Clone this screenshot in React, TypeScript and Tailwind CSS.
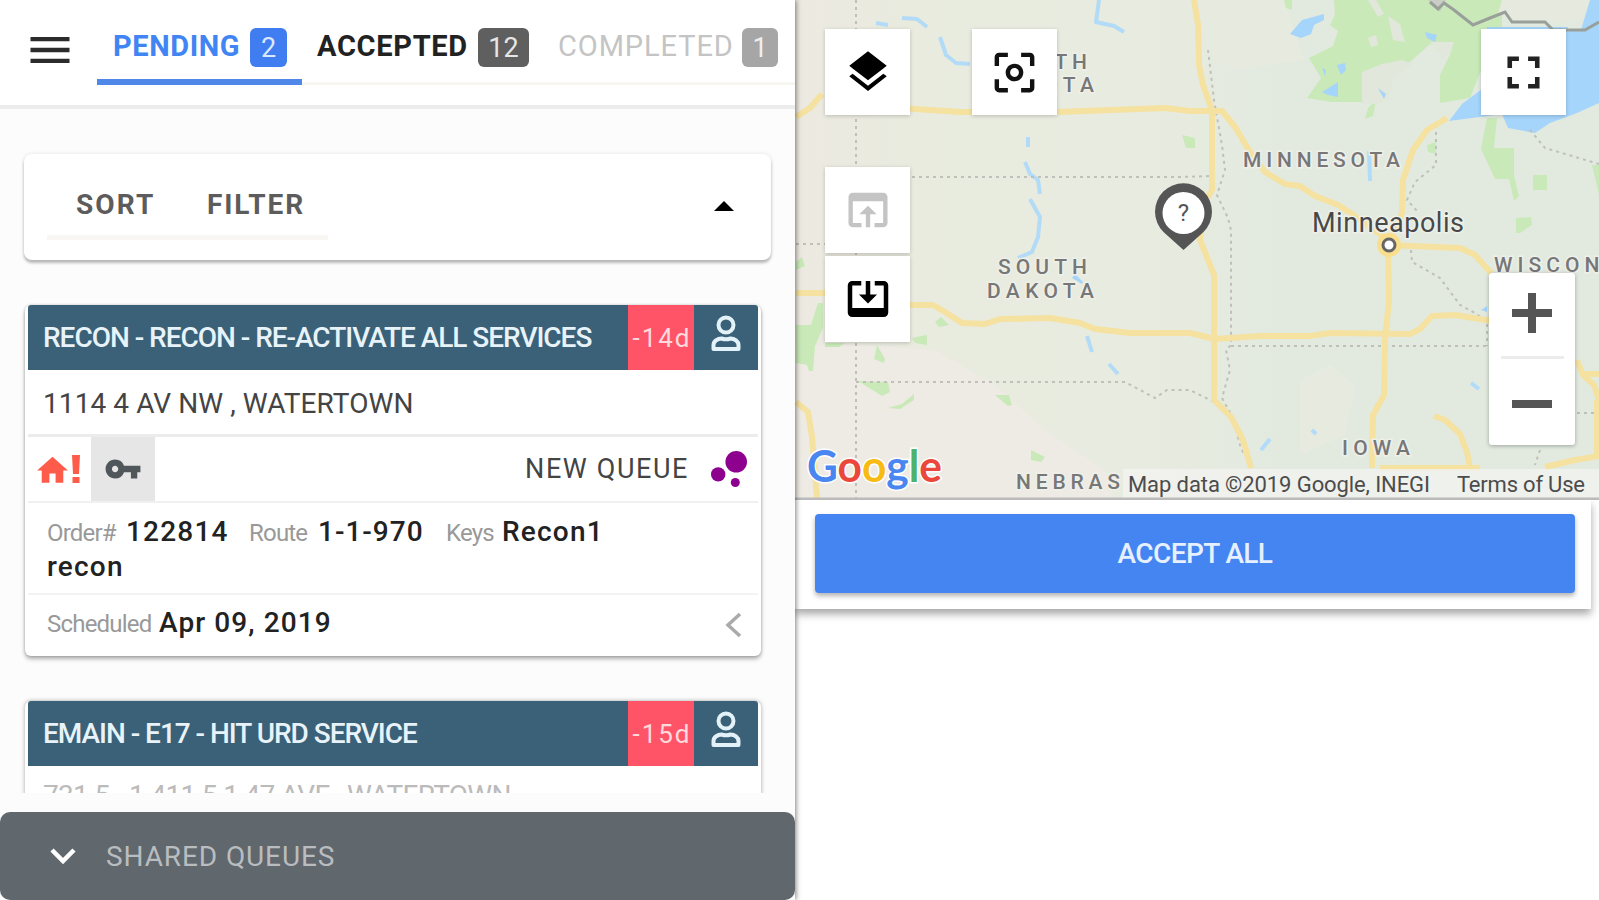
import type { ReactNode } from "react";
import clsx from "clsx";
import {
  MdArrowDropUp,
  MdBubbleChart,
  MdCenterFocusWeak,
  MdFullscreen,
  MdHome,
  MdLayers,
  MdMenu,
  MdOpenInBrowser,
  MdVpnKey,
} from "react-icons/md";

function PersonIcon() {
  return (
    <svg width="34" height="42" viewBox="0 0 34 42" fill="none" stroke="#e3f1f8" strokeWidth="4">
      <circle cx="17" cy="12" r="7.500" />
      <path d="M4.500 36v-4c0-3.500 4-6.500 8-6.500 3 1 6 1 9 0 4 0 8 3 8 6.500v4z" strokeLinejoin="round" />
    </svg>
  );
}

function Header() {
  return (
    <header className="flex h-[109px] shrink-0 border-b-4 border-[#ececec] bg-white">
      <div className="flex w-[97px] shrink-0 pt-[24px] pl-[24px]">
        <MdMenu size={52} color="#2b2b2b" />
      </div>
      <nav className="flex h-[85px] flex-1 text-[29px] leading-[40px]">
        <div className="flex w-[205px] border-b-[6px] border-[#5088ea] pt-[26px] pl-[16px] font-bold text-[#4184f3]">
          <span className="w-[137px] tracking-[0.6px]">PENDING</span>
          <span className="mt-[2px] flex h-[39px] w-[37px] items-center justify-center rounded-[6px] bg-[#3f7df0] text-[27px] font-normal text-[#dce8ff]">
            2
          </span>
        </div>
        <div className="flex w-[239px] border-b-[3px] border-[#f8f6f1] pt-[26px] pl-[15px] font-bold text-[#222]">
          <span className="w-[161px] tracking-[0.7px]">ACCEPTED</span>
          <span className="mt-[2px] flex h-[39px] w-[51px] items-center justify-center rounded-[6px] bg-[#5f5f5f] text-[27px] font-normal text-[#e6e6e6]">
            12
          </span>
        </div>
        <div className="flex flex-1 border-b-[3px] border-[#f8f6f1] pt-[26px] pl-[17px] text-[#c4c4c4]">
          <span className="w-[184px] tracking-[0.9px]">COMPLETED</span>
          <span className="mt-[2px] flex h-[39px] w-[36px] items-center justify-center rounded-[6px] bg-[#a6a6a6] text-[27px] text-[#eee]">
            1
          </span>
        </div>
      </nav>
    </header>
  );
}

function SortFilter() {
  return (
    <div className="mt-[45px] ml-[24px] flex h-[106px] w-[747px] shrink-0 items-start justify-between rounded-[8px] bg-white shadow-[0_3px_3px_rgba(0,0,0,0.25),0_0_4px_rgba(0,0,0,0.1)]">
      <div className="ml-[23px] flex h-[86px] w-[281px] border-b-[5px] border-[#f8f7f4] pt-[31px] pl-[29px] text-[28px] leading-[40px] font-bold text-[#5c5c5c]">
        <span className="w-[131px] tracking-[2.1px]">SORT</span>
        <span className="tracking-[1.900px]">FILTER</span>
      </div>
      <MdArrowDropUp size={48} color="#000" className="mt-[29px] mr-[23px]" />
    </div>
  );
}

function TaskHeader({ title, age }: { title: string; age: string }) {
  return (
    <div className="flex h-[65px] shrink-0 overflow-hidden rounded-t-[3px] bg-[#3a6178]">
      <div className="flex-1 pl-[15px] text-[28px] leading-[66px] font-medium tracking-[-1.030px] whitespace-nowrap text-[#e8f3f9]">
        {title}
      </div>
      <div className="w-[66px] bg-[#ff5468] pl-[2px] text-center text-[26px] leading-[66px] tracking-[2px] text-[#ffd9dc]">
        {age}
      </div>
      <div className="flex w-[64px] justify-center pt-[8px]">
        <PersonIcon />
      </div>
    </div>
  );
}

function Label({ children }: { children: ReactNode }) {
  return <span className="text-[24px] tracking-[-0.8px] text-[#999]">{children}</span>;
}

function TaskCard() {
  return (
    <div className="mt-[45px] ml-[25px] h-[351px] w-[736px] shrink-0 rounded-[6px] bg-white px-[3px] text-[28px] text-[#222] shadow-[0_3px_4px_rgba(0,0,0,0.3),0_0_3px_rgba(0,0,0,0.2)]">
      <TaskHeader title="RECON - RECON - RE-ACTIVATE ALL SERVICES" age="-14d" />
      <div className="h-[67px] border-b-[3px] border-[#ececec] pl-[15px] leading-[67px] tracking-[0.08px] text-[#444]">
        1114 4 AV NW , WATERTOWN
      </div>
      <div className="flex h-[66px] items-center border-b-2 border-[#f0f0f0]">
        <div className="flex w-[63px] items-center gap-[1px] pl-[6px] text-[#ff5b4a]">
          <MdHome size={37} className="mt-[3px]" />
          <svg width="8" height="28" viewBox="0 0 8 28" fill="currentColor">
            <path d="M0 0h8l-1 19H1zM0.500 22h7v6h-7z" />
          </svg>
        </div>
        <div className="flex h-full w-[64px] items-center justify-center bg-[#e6e6e6]">
          <MdVpnKey size={38} color="#50575b" />
        </div>
        <div className="ml-auto text-[27px] tracking-[1.600px] text-[#444]">NEW QUEUE</div>
        <MdBubbleChart size={54} color="#8e008e" className="mr-[2px] ml-[13px]" />
      </div>
      <div className="h-[92px] border-b-2 border-[#f3f3f3] pt-[12px] pl-[19px] leading-[34px] font-medium">
        <div className="flex items-baseline">
          <div className="w-[79px] font-normal"><Label>Order#</Label></div>
          <div className="w-[123px] tracking-[1.2px]">122814</div>
          <div className="w-[69px] font-normal"><Label>Route</Label></div>
          <div className="w-[128px] tracking-[1px]">1-1-970</div>
          <div className="w-[56px] font-normal"><Label>Keys</Label></div>
          <div className="tracking-[1.2px]">Recon1</div>
        </div>
        <div className="tracking-[1.2px]">recon</div>
      </div>
      <div className="flex h-[60px] items-baseline pt-[11px] pl-[19px] leading-[34px]">
        <div className="w-[112px]"><Label>Scheduled</Label></div>
        <div className="font-medium tracking-[1.1px]">Apr 09, 2019</div>
        <svg className="mt-[5px] mr-[16px] ml-auto self-start" width="18" height="28" viewBox="0 0 18 28" fill="none" stroke="#aaa" strokeWidth="3.500">
          <path d="M16 3L4 14l12 11" />
        </svg>
      </div>
    </div>
  );
}

function TaskPanel() {
  return (
    <div className="relative z-10 flex h-[900px] w-[795px] shrink-0 flex-col bg-[#fcfcfc] shadow-[1px_0_5px_rgba(0,0,0,0.5)]">
      <Header />
      <div className="flex h-[684px] flex-col overflow-hidden">
        <SortFilter />
        <TaskCard />
        <div className="mt-[45px] ml-[25px] h-[351px] w-[736px] shrink-0 rounded-[6px] bg-white px-[3px] text-[28px] shadow-[0_0_4px_rgba(0,0,0,0.35)]">
          <TaskHeader title="EMAIN - E17 - HIT URD SERVICE" age="-15d" />
          <div className="pl-[15px] leading-[60px] tracking-[-0.680px] text-[#bbb]">
            731 5 - 1 411 5 1 47 AVE , WATERTOWN
          </div>
        </div>
      </div>
      <div className="mt-[19px] flex h-[88px] items-center rounded-[10px] bg-[#60676d] pl-[49px] text-[28px] text-[#b9bdc0]">
        <svg width="28" height="20" viewBox="0 0 28 20" fill="none" stroke="#fff" strokeWidth="4.500">
          <path d="M3 4l11 11L25 4" />
        </svg>
        <span className="mt-[2px] ml-[29px] tracking-[0.900px]">SHARED QUEUES</span>
      </div>
    </div>
  );
}

const roads = [
  "M796 117l14-9 12-14",
  "M900 108l60 4h97l108-4 25 3 32 0 13 16 15 25 15 20 20 12 15 2 15 10 23 9 14 9 36 26",
  "M1194 0l4 25 1 40 4 20 9 25v80l-9 15-3 35 6 15 8 20v125l17 17 12 23 8 28",
  "M1447 118l-20 12-14 20-10 30-1 33-14 32",
  "M1388 245l72 3 15 7 16 18",
  "M1388 245l1 55-4 40-1 55-11 20-1 53",
  "M796 293h30M905 305h28l12 7 17 11 23 1 15-5 50-1 30 5 15 6 35 4h60l25 6 45-3h50l20-3 80 1 10-5 12-13 23-1 37 6",
  "M796 402l12 10 4 25 5 61",
  "M1434 416l11 4 15 14 7 18 3 16M1380 468h100",
  "M1545 467l30-7 24-4",
  "M1577 360l6 15 11 10 5 15M1583 374h16M1597 400v56",
];

const borders = [
  "M856 0v498",
  "M796 244h30M905 177h275l32-1",
  "M856 382h269l30 16 12-8h23l24 12",
  "M1208 50l6 50 8 45 3 25-8 25 11 23 3 12v115l-5 5 4 20-8 28 11 20 7 27 4 10",
  "M1231 346h258",
  "M1436 125v40l-21 17-8 18 11 12M1411 250l1 12 28 16 20 27 15 8 12 9v24",
  "M1530 130l15 18 54 16M1577 413h22M1540 450l-5 15",
];

const parks = [
  "M1334 0h168v28l-20 40-12 30-30 5v-28l12-25-22-6-20 18-30 4-5 36h-44l-24-4 14-20-12-20 24-12 5-15-8-6 5-10z",
  "M1284 0h8v10l-6-2z",
  "M1495 0h6v28h-60l-6-28z",
  "M1368 108l8-8-3 16-8 3z",
  "M1487 118h10l-3 30h20v28l5 20-5 5-5-22h-14l-14-30z",
  "M1533 175h14v15h-14zM1592 165h7v30zM1516 218l15-1 1 8-12 8h-4zM1427 145l9-3v12l-8-2z",
  "M1182 135l13 3v10h-9z",
  "M796 262l6-5 3 9-9 4zM796 325l15 0 7-22 5 0v25l-8 18-2 25h-4l-2-6-11-2z",
  "M825 343h20l-6 4h-14zM877 345l8 14-1 4-10-4zM912 338l15-3v10l-12-2zM935 322l6-5 8 8-10 2z",
  "M858 381l30 1 2 10-8 4zM888 408l14-4 12-10 0 6-14 9zM995 395h14l3 10-4 1zM1031 450l14 7-4 5-10-2z",
];

const water = [
  "M1290 34l12-14 22-6v6l-10 5-3 9-10 4z",
  "M1337 65l8-2 1 7-5 5zM1322 92l16-10v15l-10-2zM1425 32l12 3-2 7-8-4zM1322 68l4 2-1 6zM1378 88l8 6-2 5z",
  "M1449 121l13-17 20-15 5-62h81v3l15 1 16-9v81l-22 10-27 10-15 10-27-5-6-14-30 4z",
  "M1590 0h9v25l-18 5z",
  "M1082 284l-10-6 3-4 8 8zM1481 310l6-4v6z",
];

const rivers = [
  "M876 23l12 2M902 18l15 1 10 8M940 37l6 18 10 8 14 1",
  "M1099 0l-3 22 18 4 10 6",
  "M1028 137v10M1025 162l5 12 8 6 2 14M1030 199l10 18-2 20-6 15-14 6",
  "M1087 336l5 16M1109 364l9 10M1369 151l1 30M1261 450l9-11M1312 430l4 4M1471 383l8 6",
];

function MapLabel(props: { x: number; y: number; width: number; children: ReactNode }) {
  return (
    <text
      x={props.x}
      y={props.y}
      textLength={props.width}
      fontSize="21"
      fontWeight="500"
      fill="#777"
      stroke="#eef0ea"
      strokeWidth="3"
      paintOrder="stroke"
    >
      {props.children}
    </text>
  );
}

function MapCanvas() {
  return (
    <svg className="block" width="804" height="500" viewBox="795 0 804 500" fontFamily="Roboto, sans-serif">
      <defs>
        <linearGradient id="land" x1="0" y1="0" x2="1" y2="0">
          <stop offset="0" stopColor="#ece9e1" />
          <stop offset="0.140" stopColor="#e9ebdf" />
          <stop offset="0.450" stopColor="#e8ebdf" />
          <stop offset="0.600" stopColor="#e2eae0" />
          <stop offset="1" stopColor="#e2eae0" />
        </linearGradient>
      </defs>
      <rect x="795" width="804" height="500" fill="url(#land)" />
      <path d="M795 345l60 0 80 5 60 35 50 45 60 40 10 30H795z" fill="#eeebe4" />
      <path d="M1200 0h84l20 60-70 10-30-20zM1300 380l30-15 25 20-10 50-45 20z" fill="#e7ebdf" />
      <g fill="#c9e9b9">{parks.map((d) => <path key={d} d={d} />)}</g>
      <path d="M1368 0h8l8 14-6 3zM1388 16l12 8 5 18-12-2zM1368 38l8-3 2 10-7 2zM1362 72l20-8 20-4 12 4-20 14-6 22-12 4h-14zM1430 42h24l-4 12-8 6-4-8z" fill="#e2e7dc" />
      <path d="M1502 0h90l-12 22-60 2-15-12-8 5z" fill="#e6e9de" />
      <g fill="#a5d5fb">{water.map((d) => <path key={d} d={d} />)}</g>
      <g fill="none" stroke="#b2dbf7" strokeWidth="4" strokeLinejoin="round">
        {rivers.map((d) => <path key={d} d={d} />)}
      </g>
      <g fill="none" stroke="#bfc0b9" strokeWidth="2" strokeDasharray="3 4">
        {borders.map((d) => <path key={d} d={d} />)}
      </g>
      <path d="M1428 0h18l-6 12z" fill="#c9cdc5" />
      <path d="M1430 2l8 7 6-6 10 7 19 15 17-7 15-6 7 10h33l8 8h32l14-8" fill="none" stroke="#999f99" strokeWidth="3" />
      <g fill="none" stroke="#f5e1a0" strokeWidth="6" strokeLinejoin="round">
        {roads.map((d) => <path key={d} d={d} />)}
      </g>
      <circle cx="1389" cy="245" r="12" fill="#f8de8d" />
      <circle cx="1389" cy="245" r="6" fill="#fff" stroke="#666" strokeWidth="3" />

      <MapLabel x={998} y={69} width={89}>NORTH</MapLabel>
      <MapLabel x={987} y={92} width={107}>DAKOTA</MapLabel>
      <MapLabel x={998} y={274} width={89}>SOUTH</MapLabel>
      <MapLabel x={987} y={298} width={107}>DAKOTA</MapLabel>
      <MapLabel x={1243} y={167} width={157}>MINNESOTA</MapLabel>
      <MapLabel x={1342} y={455} width={68}>IOWA</MapLabel>
      <MapLabel x={1494} y={272} width={154}>WISCONSIN</MapLabel>
      <text x="1312" y="232" textLength="152" fontSize="27" fill="#484848" stroke="#eef0ea" strokeWidth="3" paintOrder="stroke">
        Minneapolis
      </text>

      <rect x="1123" y="469" width="476" height="30" fill="#f3f3f0" fillOpacity="0.800" />
      <MapLabel x={1016} y={489} width={104}>NEBRAS</MapLabel>
      <g fontSize="22" fill="#4c4c4c">
        <text x="1128" y="492" textLength="302">Map data ©2019 Google, INEGI</text>
        <text x="1457" y="492" textLength="128">Terms of Use</text>
      </g>
      <text x="807" y="482" textLength="135" lengthAdjust="spacingAndGlyphs" fontSize="44" fontWeight="700" fontFamily="Lato, sans-serif" stroke="#fff" strokeWidth="3" paintOrder="stroke">
        <tspan fill="#4a86f0">G</tspan>
        <tspan fill="#e9483b">o</tspan>
        <tspan fill="#f8bb15">o</tspan>
        <tspan fill="#4a86f0">g</tspan>
        <tspan fill="#4fb26b">l</tspan>
        <tspan fill="#e9483b">e</tspan>
      </text>

      <path d="M1183.500 250l-20-18a28.500 28.500 0 1 1 40 0z" fill="#555" />
      <circle cx="1183.500" cy="213" r="21" fill="#fff" />
      <text x="1183.500" y="221" fontSize="24" fill="#555" textAnchor="middle">?</text>
      <path d="M795 499h804" stroke="#bbb" strokeWidth="3" />
    </svg>
  );
}

function MapButton({ children, className }: { children: ReactNode; className?: string }) {
  return (
    <button
      className={clsx(
        "absolute flex h-[86px] w-[85px] items-center justify-center bg-white shadow-[0_1px_4px_rgba(0,0,0,0.2)]",
        className
      )}
    >
      {children}
    </button>
  );
}

function MapPanel() {
  return (
    <div className="flex flex-1 flex-col">
      <div className="relative h-[500px]">
        <MapCanvas />
        <MapButton className="top-[29px] left-[30px]">
          <MdLayers size={50} color="#000" />
        </MapButton>
        <MapButton className="top-[29px] left-[177px]">
          <MdCenterFocusWeak size={53} color="#111" />
        </MapButton>
        <MapButton className="top-[29px] left-[686px]">
          <MdFullscreen size={55} color="#222" />
        </MapButton>
        <MapButton className="top-[167px] left-[30px]">
          <MdOpenInBrowser size={52} color="#c4c4c4" />
        </MapButton>
        <MapButton className="top-[256px] left-[30px]">
          <MdOpenInBrowser size={54} color="#000" className="rotate-180" />
        </MapButton>
        <div className="absolute top-[273px] left-[694px] flex h-[172px] w-[86px] flex-col items-center rounded-[3px] bg-white text-[#555] shadow-[0_1px_4px_rgba(0,0,0,0.3)]">
          <svg className="mt-[20px]" width="40" height="40" viewBox="0 0 40 40" stroke="currentColor" strokeWidth="8">
            <path d="M20 0v40M0 20h40" />
          </svg>
          <div className="mt-[23px] h-[3px] w-[63px] bg-[#ececec]" />
          <svg className="mt-[41px]" width="40" height="8" viewBox="0 0 40 8" stroke="currentColor" strokeWidth="8">
            <path d="M0 4h40" />
          </svg>
        </div>
      </div>
      <div className="mr-[8px] h-[109px] bg-white pt-[14px] pl-[20px] shadow-[0_5px_8px_rgba(0,0,0,0.35)]">
        <button className="h-[79px] w-[760px] rounded-[4px] bg-[#4485f2] pt-[1px] text-[28px] font-medium tracking-[-0.6px] text-[#e6f0ff] shadow-[0_3px_5px_rgba(0,0,0,0.3)]">
          ACCEPT ALL
        </button>
      </div>
    </div>
  );
}

export default function App() {
  return (
    <div className="flex h-[900px] w-[1599px] overflow-hidden bg-white font-['Roboto',sans-serif]">
      <TaskPanel />
      <MapPanel />
    </div>
  );
}
